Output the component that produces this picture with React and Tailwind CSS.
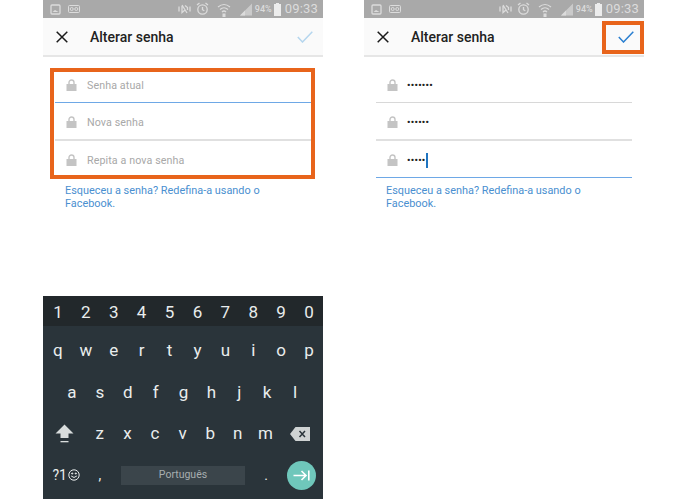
const FONT = { fontFamily: 'Roboto, "Noto Sans", sans-serif' }

const DIGITS = ['1', '2', '3', '4', '5', '6', '7', '8', '9', '0']
const TOP_ROW = ['q', 'w', 'e', 'r', 't', 'y', 'u', 'i', 'o', 'p']
const MID_ROW = ['a', 's', 'd', 'f', 'g', 'h', 'j', 'k', 'l']
const LOW_ROW = ['z', 'x', 'c', 'v', 'b', 'n', 'm']

function StatusBar() {
  return (
    <div className="flex h-[18px] items-center justify-between bg-[#a9a9a9] pl-[7px] pr-[5px] text-[#dcdcdc]">
      <div className="flex items-center gap-[7px]">
        <svg width="11" height="11" viewBox="0 0 11 11" fill="none" stroke="currentColor">
          <rect x="1" y="1" width="9" height="9" rx="1" strokeWidth="1.3" />
          <path d="M2.5 8 L5 6 L8.5 8 Z" fill="currentColor" stroke="none" />
        </svg>
        <svg width="12" height="8" viewBox="0 0 12 8" fill="none" stroke="currentColor">
          <rect x="0.5" y="0.5" width="11" height="7" rx="1" />
          <circle cx="3.7" cy="4" r="1.5" />
          <circle cx="8.3" cy="4" r="1.5" />
        </svg>
      </div>
      <div className="flex items-center">
        <svg width="16" height="12" viewBox="0 0 16 12" fill="none" stroke="currentColor" strokeWidth="1.3">
          <path d="M3 3.5 V8.5 M6 2 L11 10 M6 3 V9.5 L9 7 M9 2.5 L11.5 4.5 V7 M14 3.5 V8.5" />
        </svg>
        <svg className="ml-[4px]" width="13" height="14" viewBox="0 0 13 14" fill="none" stroke="currentColor" strokeWidth="1.3">
          <circle cx="6.5" cy="7.5" r="4.7" />
          <path d="M6.5 5 V7.7 L8.3 8.8 M1 3 L3.5 1 M12 3 L9.5 1" />
        </svg>
        <svg className="ml-[8px]" width="14" height="15" viewBox="0 0 14 15" fill="none" stroke="currentColor" strokeWidth="1.2">
          <path d="M1 5 Q7 0 13 5 M3 7.5 Q7 4 11 7.5 M5 10 Q7 8 9 10" />
          <path d="M5.5 15 L5.5 11.5 H8.5 L8.5 15 Z" fill="currentColor" stroke="none" />
        </svg>
        <svg className="ml-[8px]" width="14" height="13" viewBox="0 0 14 13">
          <path d="M13 0.5 V12.5 H1 Z" fill="currentColor" opacity="0.65" />
          <path d="M6 7.5 V12.5 H1 Z" fill="currentColor" />
        </svg>
        <span className="ml-[2px] text-[9px] font-medium leading-[18px]">94%</span>
        <span className="relative ml-[2px] mt-[1px] h-[12px] w-[7px] bg-[#ececec]">
          <span className="absolute left-[2px] top-[-1px] h-[1px] w-[3px] bg-[#ececec]" />
        </span>
        <span className="ml-[4px] text-[13px] leading-[18px] tracking-[0.2px]">09:33</span>
      </div>
    </div>
  )
}

function TopBar({ checkClass }) {
  return (
    <div className="flex h-[39px] items-center border-b-2 border-[#e6e6e6] bg-[#fafafa] pl-[13px] pr-[10px]">
      <svg width="12" height="12" viewBox="0 0 12 12" stroke="#1a1a1a" strokeWidth="1.5" fill="none">
        <path d="M0.7 0.7 L11.3 11.3 M11.3 0.7 L0.7 11.3" />
      </svg>
      <span className="ml-[22px] mt-[1px] flex-1 text-[14px] font-medium text-[#222]">Alterar senha</span>
      <svg className="mt-[1px]" width="16" height="12" viewBox="0 0 16 12" stroke={checkClass} strokeWidth="1.5" fill="none">
        <path d="M0.8 6 L5.5 11 L15.3 0.7" />
      </svg>
    </div>
  )
}

function Lock() {
  return (
    <svg width="11" height="12" viewBox="0 0 11 12" className="shrink-0">
      <path d="M3 5.5 V3.5 A2.5 2.5 0 0 1 8 3.5 V5.5" fill="none" stroke="#c4c4c4" strokeWidth="1.4" />
      <rect x="0.5" y="5" width="10" height="7" fill="#c4c4c4" />
    </svg>
  )
}

function Field({ placeholder, dots, caret, lineClass }) {
  return (
    <>
      <div className="flex h-[36px] items-center pl-[11px] pt-[1px]">
        <Lock />
        {dots ? (
          <span className="ml-[9px] mt-[1px] flex h-[16px] items-center text-[#222]">
            <span className="text-[9.5px] font-bold tracking-[0.3px]">{dots}</span>
            {caret && <span className="h-[15px] w-[2px] bg-[#1f74c0]" />}
          </span>
        ) : (
          <span className="ml-[10px] mt-[3px] text-[10.7px] tracking-[0.1px] text-[#a8a8a8]">{placeholder}</span>
        )}
      </div>
      <div className={lineClass} />
    </>
  )
}

function ForgotLink() {
  return (
    <p className="mt-[6px] pl-[10px] text-[10.9px] leading-[13px] text-[#4a8fd0]">
      Esqueceu a senha? Redefina-a usando o
      <br />
      Facebook.
    </p>
  )
}

function Keyboard() {
  return (
    <div className="mt-auto flex h-[203px] flex-col bg-[#2a343a] text-[#e9eded]">
      <div className="grid h-[30px] grid-cols-10 items-center bg-[#22282b] pl-[1px] pt-[3px] text-[17px] leading-none">
        {DIGITS.map((d) => (
          <span key={d} className="text-center">{d}</span>
        ))}
      </div>
      <div className="grid h-[46px] grid-cols-10 items-center pl-[1px] pt-[2px] text-[17px] leading-none">
        {TOP_ROW.map((k) => (
          <span key={k} className="text-center">{k}</span>
        ))}
      </div>
      <div className="flex h-[41px] items-center pl-[15px] pr-[14px] text-[17px] leading-none">
        {MID_ROW.map((k) => (
          <span key={k} className="flex-1 text-center">{k}</span>
        ))}
      </div>
      <div className="flex h-[41px] items-center text-[17px] leading-none">
        <div className="flex w-[43px] justify-center">
          <svg width="19" height="20" viewBox="0 0 19 20" fill="#d9dddd">
            <path d="M9.5 0.5 L18.5 9.5 H13.5 V14 H5.5 V9.5 H0.5 Z" />
            <rect x="5.5" y="17" width="8" height="1.3" />
          </svg>
        </div>
        {LOW_ROW.map((k) => (
          <span key={k} className="w-[27.6px] text-center">{k}</span>
        ))}
        <div className="flex flex-1 justify-center pr-[2px]">
          <svg width="20" height="14" viewBox="0 0 20 14">
            <path d="M5.5 0 H20 V14 H5.5 L0 7 Z" fill="#cfd3d3" />
            <path d="M9.5 4 L15 10 M15 4 L9.5 10" stroke="#2a343a" strokeWidth="1.5" />
          </svg>
        </div>
      </div>
      <div className="flex flex-1 items-center pb-[3px]">
        <div className="flex w-[37px] items-center justify-end text-[14px] leading-none">
          ?1
          <svg className="ml-[1px]" width="12" height="12" viewBox="0 0 12 12" fill="none" stroke="#e9eded" strokeWidth="1">
            <circle cx="6" cy="6" r="5.2" />
            <path d="M3.2 7 Q6 10 8.8 7" />
            <circle cx="4.2" cy="4.5" r="0.6" fill="#e9eded" />
            <circle cx="7.8" cy="4.5" r="0.6" fill="#e9eded" />
          </svg>
        </div>
        <span className="w-[41px] pr-[1px] text-center text-[14px]">,</span>
        <div className="flex h-[19px] w-[124px] items-center justify-center bg-[#3b454b] text-[10.5px] text-[#a7aeb0]">
          Português
        </div>
        <span className="w-[42px] text-center text-[14px]">.</span>
        <div className="flex h-[29px] w-[29px] items-center justify-center rounded-full bg-[#6fc7bb]">
          <svg width="17" height="11" viewBox="0 0 17 11" fill="none" stroke="#fff" strokeWidth="1.6">
            <path d="M0.5 5.5 H13 M8.5 1 L13 5.5 L8.5 10 M15.8 0.5 V10.5" />
          </svg>
        </div>
      </div>
    </div>
  )
}

export default function App() {
  return (
    <div className="flex h-[499px] w-[695px] gap-[41px] overflow-hidden bg-white pl-[43px]" style={FONT}>
      {/* tela esquerda: campos vazios, teclado aberto */}
      <div className="relative flex w-[280px] flex-col">
        <StatusBar />
        <TopBar checkClass="#b5d6ee" />
        <div className="mx-[12px] mt-[9px] w-[256px]">
          <Field placeholder="Senha atual" lineClass="h-px bg-[#6ea8e6]" />
          <Field placeholder="Nova senha" lineClass="h-[2px] bg-[#e0e0e0]" />
          <Field placeholder="Repita a nova senha" lineClass="h-px" />
          <ForgotLink />
        </div>
        <Keyboard />
        <div className="absolute left-[7px] top-[68px] h-[111px] w-[265px] border-[4px] border-[#e8641b]" />
      </div>

      {/* tela direita: campos preenchidos */}
      <div className="relative flex w-[280px] flex-col">
        <StatusBar />
        <TopBar checkClass="#2a7fd0" />
        <div className="mx-[12px] mt-[9px] w-[256px]">
          <Field dots="•••••••" lineClass="h-px bg-[#d8d8d8]" />
          <Field dots="••••••" lineClass="h-[2px] bg-[#e0e0e0]" />
          <Field dots="•••••" caret lineClass="h-px bg-[#6ea8e6]" />
          <ForgotLink />
        </div>
        <div className="absolute left-[238px] top-[21px] h-[33px] w-[42px] border-[4px] border-[#e8641b]" />
      </div>
    </div>
  )
}
